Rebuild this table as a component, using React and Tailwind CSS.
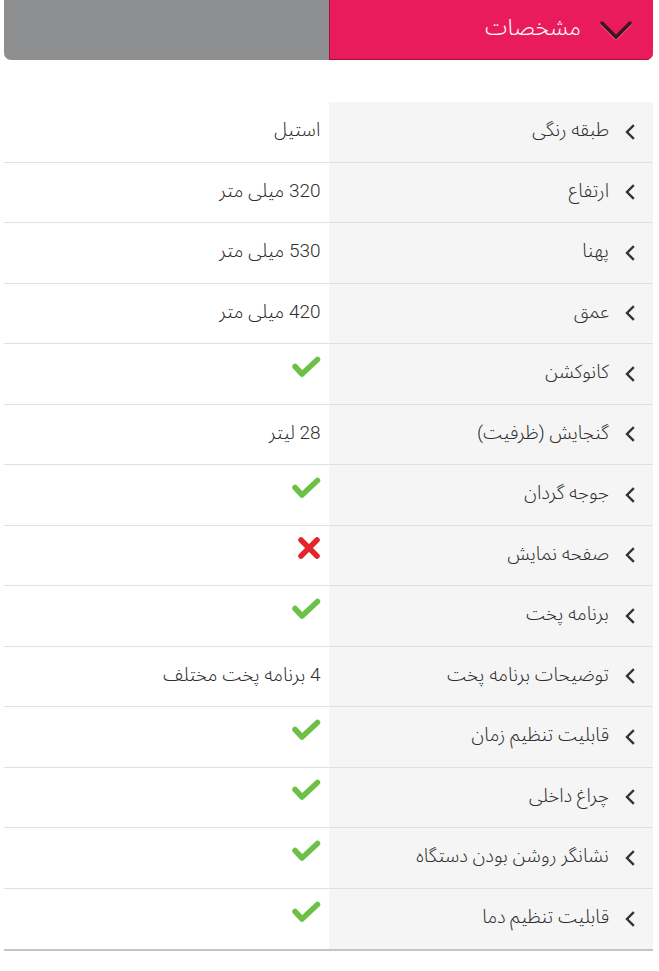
import React from "react";

const rows = [
  ["طبقه رنگی", "استیل"],
  ["ارتفاع", "320 میلی متر"],
  ["پهنا", "530 میلی متر"],
  ["عمق", "420 میلی متر"],
  ["کانوکشن", "yes"],
  ["گنجایش (ظرفیت)", "28 لیتر"],
  ["جوجه گردان", "yes"],
  ["صفحه نمایش", "no"],
  ["برنامه پخت", "yes"],
  ["توضیحات برنامه پخت", "4 برنامه پخت مختلف"],
  ["قابلیت تنظیم زمان", "yes"],
  ["چراغ داخلی", "yes"],
  ["نشانگر روشن بودن دستگاه", "yes"],
  ["قابلیت تنظیم دما", "yes"],
];

function Check() {
  return (
    <svg width="30" height="22" viewBox="0 0 30 22" className="mt-[-14px]">
      <polyline points="4,10.5 11,18 26.5,3.5" fill="none" stroke="#6cc046" strokeWidth="5.5" strokeLinecap="round" strokeLinejoin="round" />
    </svg>
  );
}

function Cross() {
  return (
    <svg width="24" height="22" viewBox="0 0 24 22" className="mt-[-14px]">
      <path d="M4 3 L20 19 M20 3 L4 19" fill="none" stroke="#e2262b" strokeWidth="5.5" strokeLinecap="round" />
    </svg>
  );
}

function ChevronLeft() {
  return (
    <svg width="12" height="16" viewBox="0 0 12 16">
      <polyline points="9,2 3,8 9,14" fill="none" stroke="#333" strokeWidth="2.4" strokeLinecap="square" />
    </svg>
  );
}

export default function App() {
  return (
    <div
      dir="rtl"
      className="bg-white w-[659px] min-h-[971px] pl-[4px] pr-[6px]"
      style={{ fontFamily: 'Roboto, "Noto Sans Arabic", "DejaVu Sans", sans-serif' }}
    >
      <div className="flex h-[60px] rounded-b-[7px] overflow-hidden bg-[#8e8f90]">
        <div className="w-1/2 bg-[#ea1b5d] border-l border-b border-[#a3123f] flex items-center pr-[20px] gap-[18px] shadow-[0_1px_0_rgba(0,0,0,0.15)]">
          <svg width="34" height="22" viewBox="0 0 34 22">
            <polyline points="3,4 17,18 31,4" fill="none" stroke="#f06a94" strokeWidth="3.5" strokeLinecap="round" transform="translate(0,1.5)" opacity="0.6" />
            <polyline points="3,4 17,18 31,4" fill="none" stroke="#3d1626" strokeWidth="3.5" strokeLinecap="round" />
          </svg>
          <span className="text-white text-[23px] font-light leading-none mb-[4px]">مشخصات</span>
        </div>
        <div className="w-1/2" />
      </div>

      <div className="mt-[42px] border-b-2 border-[#c4c4c4]">
        {rows.map(([label, value], i) => (
          <div
            key={i}
            className={`flex h-[60.5px] ${i < rows.length - 1 ? "border-b border-[#e0e0e0]" : ""}`}
          >
            <div className="w-1/2 bg-[#f5f5f5] flex items-center pr-[17px] gap-[15px] text-[#2e2e2e] text-[19px] font-light">
              <ChevronLeft />
              <span className="mb-[3px]">{label}</span>
            </div>
            <div className="w-1/2 flex items-center pr-[8px] text-[#2e2e2e] text-[19px] font-light">
              {value === "yes" ? <Check /> : value === "no" ? <Cross /> : <span className="mb-[3px]">{value}</span>}
            </div>
          </div>
        ))}
      </div>
    </div>
  );
}
